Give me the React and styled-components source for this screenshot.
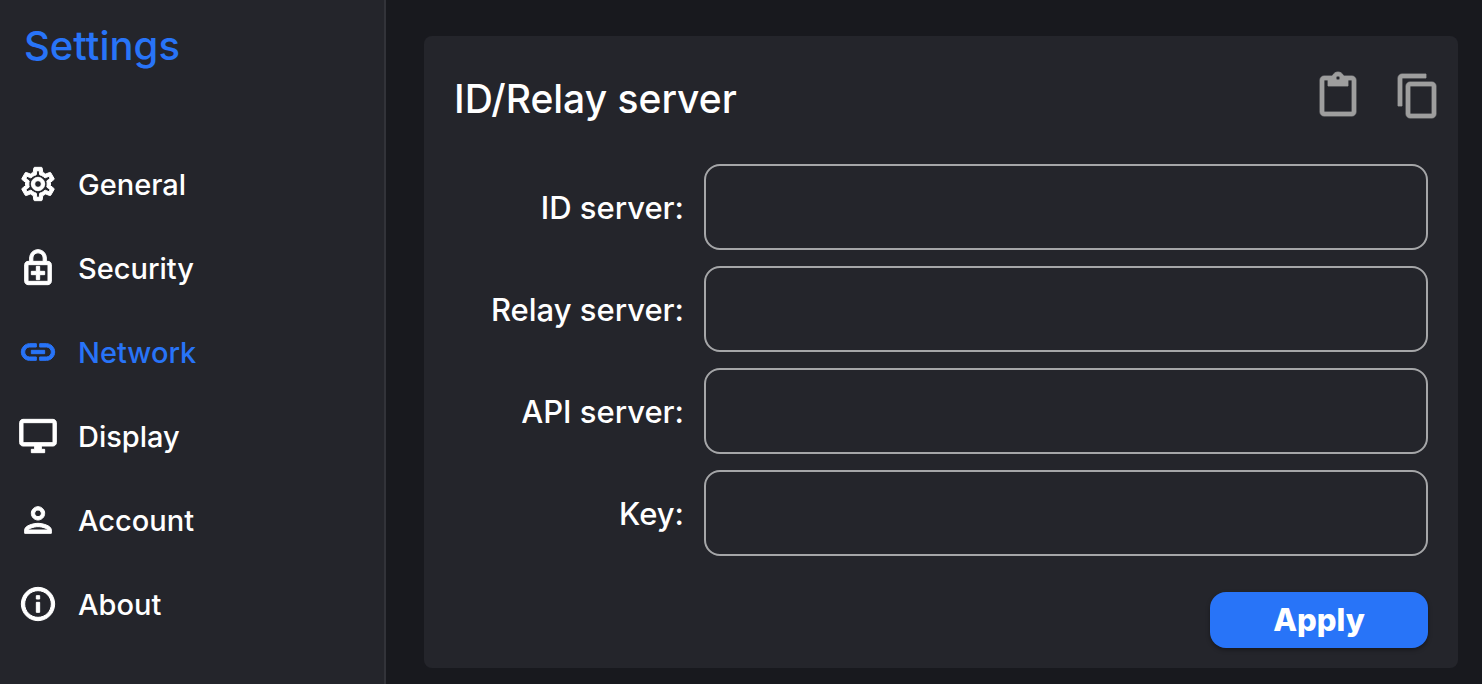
import React, { useState } from "react";
import styled, { createGlobalStyle, ThemeProvider } from "styled-components";
import {
  MdOutlineSettings,
  MdOutlineEnhancedEncryption,
  MdOutlineLink,
  MdOutlineDesktopWindows,
  MdOutlinePerson,
  MdOutlineInfo,
  MdContentPaste,
  MdContentCopy,
} from "react-icons/md";

const theme = {
  page: "#18191e",
  surface: "#24252b",
  divider: "#323339",
  text: "#ffffff",
  accent: "#2874f8",
  outline: "#a5a6a8",
  muted: "#9e9e9e",
};

const GlobalStyle = createGlobalStyle`
  *, *::before, *::after { box-sizing: border-box; }
  body {
    margin: 0;
    background: ${theme.page};
    color: ${theme.text};
    font-family: Inter, "Liberation Sans", sans-serif;
    font-weight: 500;
  }
`;

const Layout = styled.div`
  display: flex;
  min-height: 100vh;
`;

const Sidebar = styled.aside`
  flex: 0 0 386px;
  background: ${(p) => p.theme.surface};
  border-right: 2px solid ${(p) => p.theme.divider};
`;

const SidebarTitle = styled.h1`
  margin: 0;
  padding: 22px 24px 72px;
  font-size: 40px;
  line-height: 48px;
  font-weight: inherit;
  color: ${(p) => p.theme.accent};
`;

const Nav = styled.nav`
  display: flex;
  flex-direction: column;
`;

const NavItem = styled.a`
  display: flex;
  align-items: center;
  gap: 20px;
  height: 84px;
  padding: 0 18px;
  text-decoration: none;
  color: ${(p) => (p.$active ? p.theme.accent : p.theme.text)};

  svg {
    flex: none;
    width: 40px;
    height: 40px;
    overflow: visible;
  }

  path:not([fill="none"]) {
    stroke: currentColor;
    stroke-width: 0.6;
  }
`;

const NavLabel = styled.span`
  padding-top: 2px;
  font-size: 29px;
  line-height: 36px;
`;

const Main = styled.main`
  flex: 1;
  min-width: 0;
  padding: 36px 24px 16px 38px;
`;

const Card = styled.section`
  padding: 36px 30px 20px;
  border-radius: 8px;
  background: ${(p) => p.theme.surface};
`;

const CardHeader = styled.header`
  display: flex;
  align-items: flex-start;
  justify-content: space-between;
  margin-right: -14px;
`;

const CardTitle = styled.h2`
  margin: 0;
  font-size: 39px;
  line-height: 54px;
  font-weight: inherit;
`;

const CardActions = styled.div`
  display: flex;
  gap: 32px;
`;

const IconButton = styled.button`
  display: flex;
  padding: 0;
  border: 0;
  background: none;
  color: ${(p) => p.theme.muted};
  cursor: pointer;

  svg {
    width: 48px;
    height: 48px;
    overflow: visible;
  }

  path:not([fill="none"]) {
    stroke: currentColor;
    stroke-width: 0.4;
  }
`;

const Form = styled.form`
  display: flex;
  flex-direction: column;
  gap: 16px;
  padding-top: 38px;
`;

const Field = styled.div`
  display: flex;
  align-items: center;
  gap: 20px;
`;

const FieldLabel = styled.label`
  flex: 0 0 230px;
  padding-top: 2px;
  text-align: right;
  font-size: 31px;
  line-height: 40px;
`;

const TextInput = styled.input`
  flex: 1;
  min-width: 0;
  height: 86px;
  padding: 0 24px;
  border: 2px solid ${(p) => p.theme.outline};
  border-radius: 16px;
  outline: none;
  background: transparent;
  color: inherit;
  font: inherit;
  font-size: 31px;

  &:focus {
    border-color: ${(p) => p.theme.accent};
  }
`;

const ApplyButton = styled.button`
  align-self: flex-end;
  width: 218px;
  height: 56px;
  margin-top: 20px;
  padding: 0;
  border: 0;
  border-radius: 16px;
  background: ${(p) => p.theme.accent};
  box-shadow: 0 2px 4px rgba(0, 0, 0, 0.35);
  color: ${(p) => p.theme.text};
  font: inherit;
  font-size: 31px;
  line-height: 40px;
  font-weight: 800;
  cursor: pointer;
`;

const sections = [
  { name: "General", Icon: MdOutlineSettings },
  { name: "Security", Icon: MdOutlineEnhancedEncryption },
  { name: "Network", Icon: MdOutlineLink },
  { name: "Display", Icon: MdOutlineDesktopWindows },
  { name: "Account", Icon: MdOutlinePerson },
  { name: "About", Icon: MdOutlineInfo },
];

const fields = [
  { id: "id-server", label: "ID server:" },
  { id: "relay-server", label: "Relay server:" },
  { id: "api-server", label: "API server:" },
  { id: "key", label: "Key:" },
];

export default function App() {
  const [active, setActive] = useState("Network");

  return (
    <ThemeProvider theme={theme}>
      <GlobalStyle />
      <Layout>
        <Sidebar>
          <SidebarTitle>Settings</SidebarTitle>
          <Nav>
            {sections.map(({ name, Icon }) => (
              <NavItem
                key={name}
                href={`#${name.toLowerCase()}`}
                $active={name === active}
                aria-current={name === active ? "page" : undefined}
                onClick={() => setActive(name)}
              >
                <Icon aria-hidden="true" />
                <NavLabel>{name}</NavLabel>
              </NavItem>
            ))}
          </Nav>
        </Sidebar>
        <Main>
          <Card>
            <CardHeader>
              <CardTitle>ID/Relay server</CardTitle>
              <CardActions>
                <IconButton type="button" aria-label="Import server config">
                  <MdContentPaste />
                </IconButton>
                <IconButton type="button" aria-label="Export server config">
                  <MdContentCopy />
                </IconButton>
              </CardActions>
            </CardHeader>
            <Form onSubmit={(e) => e.preventDefault()}>
              {fields.map(({ id, label }) => (
                <Field key={id}>
                  <FieldLabel htmlFor={id}>{label}</FieldLabel>
                  <TextInput id={id} type="text" />
                </Field>
              ))}
              <ApplyButton type="submit">Apply</ApplyButton>
            </Form>
          </Card>
        </Main>
      </Layout>
    </ThemeProvider>
  );
}
